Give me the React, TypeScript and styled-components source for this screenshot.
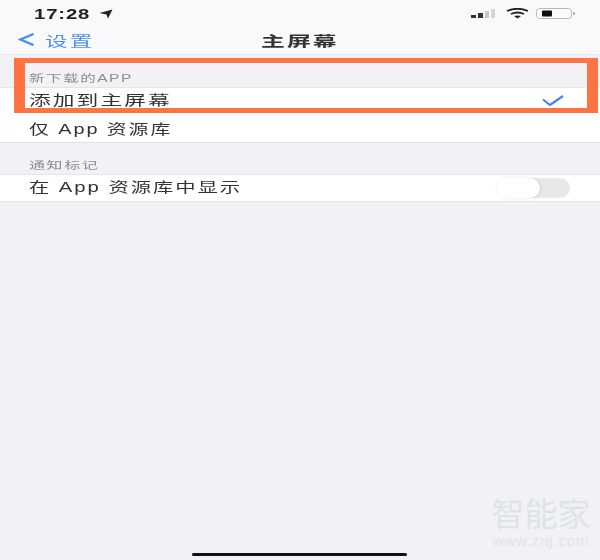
import React from "react";
import styled, { createGlobalStyle } from "styled-components";

const Global = createGlobalStyle`
  html, body { margin: 0; padding: 0; background: #f1f1f6; }
  #root { width: 600px; height: 560px; overflow: hidden; }
`;
const Screen = styled.div`
  position: relative;
  width: 600px;
  height: 560px;
  background: #f1f1f6;
  font-family: "Liberation Sans", "Noto Sans CJK SC", sans-serif;
  overflow: hidden;
`;
const Soft = styled.div`
  filter: blur(0.6px);
  height: 100%;
  display: flex;
  flex-direction: column;
`;
const Wide = styled.span<{ $scale: number; $origin?: string }>`
  display: inline-block;
  white-space: nowrap;
  transform: scaleX(${(p) => p.$scale});
  transform-origin: ${(p) => p.$origin ?? "left"} center;
`;
const Header = styled.header`
  height: 55px;
  background: #f9f9fb;
  border-bottom: 1px solid #e9e9ec;
  box-sizing: border-box;
  display: flex;
  flex-direction: column;
`;
const StatusBar = styled.div`
  height: 27px;
  display: flex;
  align-items: center;
  justify-content: space-between;
  padding: 0 24px 0 34px;
`;
const Clock = styled.div`
  display: flex;
  align-items: center;
  gap: 26px;
  font-size: 14px;
  font-weight: 700;
  letter-spacing: 0.6px;
  color: #222;
`;
const StatusIcons = styled.div`
  display: flex;
  align-items: center;
  gap: 7px;
`;
const NavBar = styled.div`
  position: relative;
  flex: 1;
  display: flex;
  align-items: center;
  padding: 0 0 2px 18px;
`;
const Back = styled.div`
  display: flex;
  align-items: center;
  gap: 11px;
  font-size: 14px;
  letter-spacing: 1.4px;
  color: #4f8fe6;
`;
const Title = styled.div`
  position: absolute;
  left: 0;
  right: 0;
  top: 3px;
  text-align: center;
  font-size: 14px;
  font-weight: 700;
  letter-spacing: 1.2px;
  color: #333;
`;
const SectionLabel = styled.div<{ $height: number }>`
  height: ${(p) => p.$height}px;
  box-sizing: border-box;
  padding: 0 0 2px 29px;
  display: flex;
  align-items: flex-end;
  font-size: 10px;
  letter-spacing: 1px;
  color: #8c8c92;
`;
const Group = styled.div`
  background: #fff;
  border-top: 1px solid #e6e6ea;
  border-bottom: 1px solid #e0e0e5;
`;
const Row = styled.div<{ $height: number; $lift: number }>`
  height: ${(p) => p.$height}px;
  box-sizing: border-box;
  display: flex;
  align-items: center;
  justify-content: space-between;
  padding: 0 29px ${(p) => p.$lift}px;
  font-size: 14px;
  letter-spacing: 1.35px;
  color: #333335;
`;
const CheckSlot = styled.div`
  display: flex;
  margin: 2px 7px 0 0;
`;
const Toggle = styled.div`
  width: 74px;
  height: 20px;
  border-radius: 10px;
  background: #e8e8ea;
  position: relative;
  margin: 5px 1px 0 0;
`;
const Knob = styled.div`
  position: absolute;
  left: 0;
  top: 0;
  width: 44px;
  height: 20px;
  border-radius: 10px;
  background: #fff;
  box-shadow: 1px 0 3px rgba(0, 0, 0, 0.12);
`;
const Highlight = styled.div`
  position: absolute;
  left: 14px;
  top: 58px;
  width: 584px;
  height: 55px;
  box-sizing: border-box;
  border-style: solid;
  border-color: #ff7242;
  border-width: 5px 11px 5px 11px;
`;
const HomeBar = styled.div`
  position: absolute;
  left: 192px;
  top: 553px;
  width: 215px;
  height: 3px;
  border-radius: 2px;
  background: #111;
`;
const Watermark = styled.div`
  position: absolute;
  right: 9px;
  top: 498px;
  width: 100px;
  display: flex;
  flex-direction: column;
  align-items: center;
  color: #dde4e9;
`;
const MarkName = styled.div`
  font-size: 33px;
  line-height: 34px;
  white-space: nowrap;
`;
const MarkUrl = styled.div`
  font-size: 15px;
  line-height: 17px;
  letter-spacing: 0.8px;
  color: #dfe4e8;
`;

const Arrow = () => (
  <svg width="14" height="10" viewBox="0 0 14 10">
    <path d="M0.500 4 L13.500 0.500 L9 9.500 L7.500 5.500 Z" fill="#222" />
  </svg>
);
const Signal = () => (
  <svg width="28" height="10" viewBox="0 0 28 10">
    <rect x="0" y="6" width="5" height="3" fill="#333" />
    <rect x="7" y="4" width="5" height="5" fill="#333" />
    <rect x="14" y="2" width="4" height="7" fill="#c8c8cc" />
    <rect x="20" y="0" width="4" height="9" fill="#d4d4d8" />
  </svg>
);
const Wifi = () => (
  <svg width="23" height="11" viewBox="0 0 23 11" fill="none" stroke="#222" strokeWidth="1.800">
    <path d="M1 3 Q11.500 -1.500 22 3" />
    <path d="M5 6 Q11.500 3 18 6" />
    <path d="M11.500 10.500 L8 8 Q11.500 6.800 15 8 Z" fill="#222" stroke="none" />
  </svg>
);
const Battery = () => (
  <svg width="40" height="11" viewBox="0 0 40 11">
    <rect x="0.500" y="0.500" width="35" height="10" rx="3" fill="#fbfbfc" stroke="#bbb" />
    <rect x="6" y="2.500" width="10" height="6" rx="1" fill="#111" />
    <rect x="37" y="4" width="2" height="3" rx="1" fill="#aaa" />
  </svg>
);
const Chevron = () => (
  <svg width="16" height="13" viewBox="0 0 16 13" fill="none" stroke="#4f8fe6" strokeWidth="2.400">
    <path d="M15.500 1 L2.500 6.500 L15.500 12" />
  </svg>
);
const Check = () => (
  <svg width="22" height="11" viewBox="0 0 22 11" fill="none" stroke="#4a84e4" strokeWidth="2.200">
    <path d="M1 4.500 L8 10 L21 1" />
  </svg>
);

export default function App() {
  return (
    <Screen>
      <Global />
      <Soft>
        <Header>
          <StatusBar>
            <Clock>
              <Wide $scale={1.45}>17:28</Wide>
              <Arrow />
            </Clock>
            <StatusIcons>
              <Signal />
              <Wifi />
              <Battery />
            </StatusIcons>
          </StatusBar>
          <NavBar>
            <Back>
              <Chevron />
              <Wide $scale={1.6}>设置</Wide>
            </Back>
            <Title>
              <Wide $scale={1.7} $origin="center">
                主屏幕
              </Wide>
            </Title>
          </NavBar>
        </Header>
        <SectionLabel $height={32}>
          <Wide $scale={1.55}>新下载的APP</Wide>
        </SectionLabel>
        <Group>
          <Row $height={27} $lift={5}>
            <Wide $scale={1.55}>添加到主屏幕</Wide>
            <CheckSlot>
              <Check />
            </CheckSlot>
          </Row>
          <Row $height={27} $lift={1}>
            <Wide $scale={1.42}>仅 App 资源库</Wide>
          </Row>
        </Group>
        <SectionLabel $height={31}>
          <Wide $scale={1.6}>通知标记</Wide>
        </SectionLabel>
        <Group>
          <Row $height={26} $lift={5}>
            <Wide $scale={1.45}>在 App 资源库中显示</Wide>
            <Toggle>
              <Knob />
            </Toggle>
          </Row>
        </Group>
      </Soft>
      <Highlight />
      <Watermark>
        <MarkName>智能家</MarkName>
        <MarkUrl>www.znj.com</MarkUrl>
      </Watermark>
      <HomeBar />
    </Screen>
  );
}
